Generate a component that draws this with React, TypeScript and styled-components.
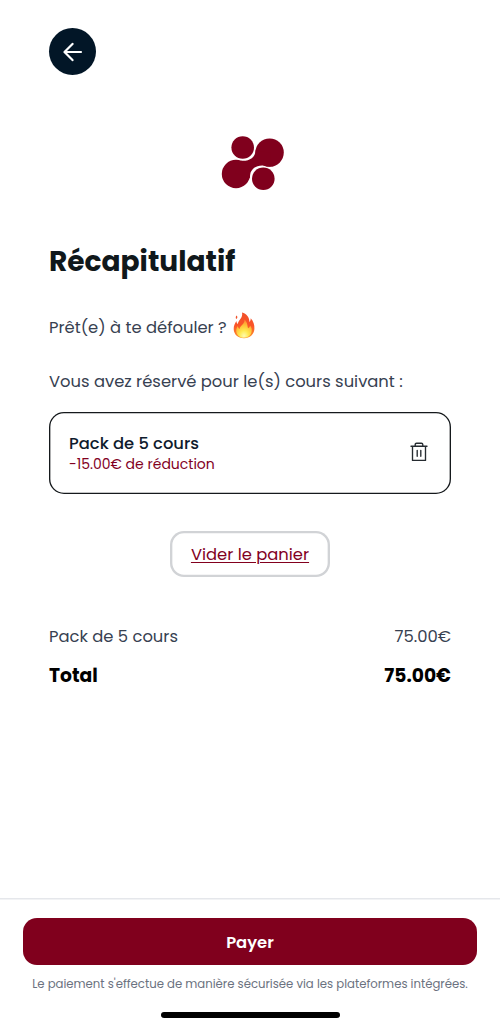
import React from "react";
import styled, { createGlobalStyle } from "styled-components";

const GlobalStyle = createGlobalStyle`
  *, *::before, *::after { box-sizing: border-box; }
  html, body { margin: 0; padding: 0; background: #fff; }
  body { font-family: Poppins, Inter, sans-serif; color: #374151; }
  button { font-family: inherit; cursor: pointer; margin: 0; }
  svg { display: block; flex: none; }
`;

const Screen = styled.div`
  display: flex;
  flex-direction: column;
  width: 100%;
  height: 1021px;
  background: #fff;
`;

const Content = styled.main`
  flex: 1;
  display: flex;
  flex-direction: column;
  padding: 28.4px 49px 0;
`;

const BackButton = styled.button`
  display: flex;
  align-items: center;
  justify-content: center;
  width: 47px;
  height: 47px;
  padding: 0;
  border: 0;
  border-radius: 50%;
  background: #021627;
`;

const LogoWrap = styled.div`
  display: flex;
  justify-content: center;
  margin-top: 59.6px;
  padding-left: 5px;
`;

const Title = styled.h1`
  margin: 51px 0 0;
  font-size: 28.05px;
  line-height: 40px;
  font-weight: 700;
  color: #10181b;
`;

const Paragraph = styled.p<{ $top: number }>`
  display: flex;
  align-items: center;
  gap: 6.5px;
  margin: ${(p) => p.$top}px 0 0;
  font-size: 16.36px;
  line-height: 28px;
  white-space: nowrap;
  color: #374151;
`;

const Flame = styled.svg`
  position: relative;
  top: -3px;
`;

const Card = styled.section`
  display: flex;
  align-items: center;
  justify-content: space-between;
  height: 82px;
  margin-top: 15.6px;
  padding: 0 23px 0 20px;
  border-radius: 15px;
  box-shadow: inset 0 0 0 1.35px #15191c;
`;

const CardTitle = styled.div`
  padding-top: 2px;
  font-size: 16.36px;
  line-height: 21px;
  font-weight: 500;
  color: #0f1b2d;
`;

const Discount = styled.div`
  font-size: 14px;
  line-height: 20px;
  color: #82001e;
`;

const IconButton = styled.button`
  padding: 0 0 2px;
  border: 0;
  background: none;
`;

const ClearButton = styled.button`
  align-self: center;
  width: 160px;
  height: 46px;
  margin-top: 37.4px;
  padding: 0;
  border: 0;
  border-radius: 14px;
  box-shadow: inset 0 0 0 2.35px #d1d3d6;
  background: #fff;
  font-size: 16.36px;
  color: #82001e;
  text-decoration: underline;
  text-decoration-thickness: 1px;
  text-underline-offset: 2px;
`;

const Summary = styled.div`
  display: flex;
  flex-direction: column;
  gap: 11px;
  margin-top: 46px;
`;

const SummaryRow = styled.div<{ $total?: boolean }>`
  display: flex;
  justify-content: space-between;
  font-size: ${(p) => (p.$total ? 18.7 : 16.36)}px;
  line-height: 28px;
  font-weight: ${(p) => (p.$total ? 700 : 400)};
  color: ${(p) => (p.$total ? "#000" : "#374151")};
`;

const Footer = styled.footer`
  display: flex;
  flex-direction: column;
  align-items: center;
  height: 122.6px;
  padding: 20px 23.4px 0;
  box-shadow: inset 0 1.5px 0 #e5e7eb;
`;

const PayButton = styled.button`
  width: 100%;
  height: 46.8px;
  padding: 1px 0 0;
  border: 0;
  border-radius: 14px;
  background: #80001d;
  font-size: 16.36px;
  font-weight: 600;
  color: #fff;
`;

const Note = styled.p`
  margin: 10px 0 0;
  font-size: 11.69px;
  line-height: 18px;
  white-space: nowrap;
  color: #6b7280;
`;

const HomeIndicator = styled.div`
  width: 179px;
  height: 6px;
  margin-top: 18.6px;
  border-radius: 3px;
  background: #000;
`;

const ArrowLeft = () => (
  <svg width="20" height="20" viewBox="0 0 20 20" fill="none" stroke="#fff" strokeWidth="2.2" strokeLinecap="round" strokeLinejoin="round">
    <path d="M18 10H1.800M9.500 1.900 1.500 10l8 8.100" />
  </svg>
);

const Logo = () => (
  <svg width="64" height="56" viewBox="0 0 64 56" fill="#80001d">
    <circle cx="21.7" cy="12.5" r="11.3" />
    <circle cx="42.3" cy="43.8" r="11.3" />
    <circle cx="48.6" cy="17.6" r="14.2" />
    <circle cx="15" cy="39" r="14.2" />
    <path d="M34.6 15.2C34.2 23 28 26.4 20 25.7L14 38l14.800 5C28.500 35 34 30 42 30.400l7.500 1.400L50 18Z" />
  </svg>
);

const Fire = () => (
  <Flame width="22" height="27" viewBox="0 0 22 27">
    <defs>
      <linearGradient id="outer" x1="0" y1="0" x2="0" y2="1">
        <stop offset="0" stopColor="#f0502a" />
        <stop offset="0.5" stopColor="#fa5428" />
        <stop offset="1" stopColor="#fd942d" />
      </linearGradient>
      <radialGradient id="inner" cx="0.5" cy="0.9" r="0.85">
        <stop offset="0" stopColor="#fffbb0" />
        <stop offset="0.35" stopColor="#ffe94f" />
        <stop offset="0.7" stopColor="#ffbd38" />
        <stop offset="1" stopColor="#ff8a30" />
      </radialGradient>
    </defs>
    <path fill="url(#outer)" d="M9 .5c4.500 1.200 7.600 4.800 7.400 9.500 1-.9 1.400-2.200 1.300-3.700 2.700 2.700 4 6.900 3.700 10.800-.400 5.600-4.600 9.200-10.400 9.200C5 26.300.900 22.500.700 17.300c-.100-3.400 1.200-5.900 2.800-8.200 0 1.500.400 2.400 1.200 3C5.300 8.200 10.300 5.600 9 .500Z" />
    <path fill="#f0522b" d="M3.600 3.500c1.300 1.200.900 2.500-.300 3.600-.900-1.200-.700-2.500.300-3.600Z" />
    <path fill="url(#inner)" d="M11.500 7.500c3.400 3.200 2.700 6.500 3.600 8.700 1-.500 1.800-1.400 1.900-2.700 1.700 2 2.300 4.500 1.400 7.200-1.100 3.400-3.900 5.100-7.400 5.100-3.800 0-6.900-2-7.600-5.500-.500-2.300.100-4.400 1.300-6.300.300 1.400.900 2.300 1.900 2.900.200-3.200 5.300-4.500 4.900-9.400Z" />
  </Flame>
);

const Trash = () => (
  <svg width="18" height="20" viewBox="0 0 18 20" fill="none" stroke="#252b30" strokeWidth="1.35" strokeLinecap="round" strokeLinejoin="round">
    <path d="M1 4.200h16M2.500 4.200v14.200h13V4.200M5.200 4V2.600q0-1.400 1.400-1.400h4.800q1.400 0 1.400 1.400V4M7.200 8.300v6M10.800 8.300v6" />
  </svg>
);

export default function App() {
  return (
    <>
      <GlobalStyle />
      <Screen>
        <Content>
          <BackButton aria-label="Retour"><ArrowLeft /></BackButton>
          <LogoWrap><Logo /></LogoWrap>
          <Title>Récapitulatif</Title>
          <Paragraph $top={32.4}><span>Prêt(e) à te défouler ?</span><Fire /></Paragraph>
          <Paragraph $top={26}><span>Vous avez réservé pour le(s) cours suivant :</span></Paragraph>
          <Card>
            <div>
              <CardTitle>Pack de 5 cours</CardTitle>
              <Discount>-15.00€ de réduction</Discount>
            </div>
            <IconButton aria-label="Supprimer"><Trash /></IconButton>
          </Card>
          <ClearButton>Vider le panier</ClearButton>
          <Summary>
            <SummaryRow><span>Pack de 5 cours</span><span>75.00€</span></SummaryRow>
            <SummaryRow $total><span>Total</span><span>75.00€</span></SummaryRow>
          </Summary>
        </Content>
        <Footer>
          <PayButton>Payer</PayButton>
          <Note>Le paiement s'effectue de manière sécurisée via les plateformes intégrées.</Note>
          <HomeIndicator />
        </Footer>
      </Screen>
    </>
  );
}
